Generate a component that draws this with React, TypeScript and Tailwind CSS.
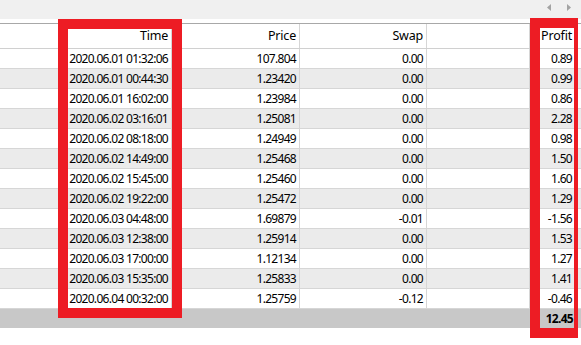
import React from "react"

const rows = [
  ["2020.06.01 01:32:06", "107.804", "0.00", "0.89"],
  ["2020.06.01 00:44:30", "1.23420", "0.00", "0.99"],
  ["2020.06.01 16:02:00", "1.23984", "0.00", "0.86"],
  ["2020.06.02 03:16:01", "1.25081", "0.00", "2.28"],
  ["2020.06.02 08:18:00", "1.24949", "0.00", "0.98"],
  ["2020.06.02 14:49:00", "1.25468", "0.00", "1.50"],
  ["2020.06.02 15:45:00", "1.25460", "0.00", "1.60"],
  ["2020.06.02 19:22:00", "1.25472", "0.00", "1.29"],
  ["2020.06.03 04:48:00", "1.69879", "-0.01", "-1.56"],
  ["2020.06.03 12:38:00", "1.25914", "0.00", "1.53"],
  ["2020.06.03 17:00:00", "1.12134", "0.00", "1.27"],
  ["2020.06.03 15:35:00", "1.25833", "0.00", "1.41"],
  ["2020.06.04 00:32:00", "1.25759", "-0.12", "-0.46"],
]

const grid = "grid grid-cols-[60px_112px_128px_127px_103px_46px_1fr]"
const cell = "border-r border-[#d6d6d6] pr-[3px] text-right leading-none flex items-center justify-end"

const App: React.FC = () => {
  return (
    <div
      className="relative w-[581px] h-[345px] bg-white overflow-hidden text-[12px] tracking-[-0.7px] text-black"
      style={{ fontFamily: '"Noto Sans", "Open Sans", sans-serif' }}
    >
      {/* tab strip with scroll arrows */}
      <div className="h-[19px] bg-[#f0f0f0] flex items-start justify-end gap-[16px] pr-[10px] pt-[4px]">
        <svg width="4" height="7" viewBox="0 0 4 7"><path d="M4 0 L0 3.5 L4 7 Z" fill="#a3a3a3" /></svg>
        <svg width="4" height="7" viewBox="0 0 4 7"><path d="M0 0 L4 3.5 L0 7 Z" fill="#a3a3a3" /></svg>
      </div>

      <div className="mt-[4px] border-t border-[#a8a8a8]">
        {/* header */}
        <div className={`${grid} h-[25px] border-b border-[#d0d0d0] text-[12.5px] tracking-[-0.2px]`}>
          <div className={cell}></div>
          <div className={cell}>Time</div>
          <div className={cell}>Price</div>
          <div className={cell}>Swap</div>
          <div className={cell}></div>
          <div className={cell}>Profit</div>
          <div></div>
        </div>

        {rows.map((r, i) => (
          <div
            key={i}
            className={`${grid} h-[20px] border-b border-[#d6d6d6] ${i % 2 === 1 ? "bg-[#ebebeb]" : "bg-white"}`}
          >
            <div className={cell}></div>
            <div className={cell}>{r[0]}</div>
            <div className={cell}>{r[1]}</div>
            <div className={cell}>{r[2]}</div>
            <div className={cell}></div>
            <div className={cell}>{r[3]}</div>
            <div></div>
          </div>
        ))}

        {/* total */}
        <div className={`${grid} h-[19px] bg-[#c8c8c8]`}>
          <div className="col-span-5"></div>
          <div className="pr-[3px] flex items-center justify-end font-bold leading-none">12.45</div>
          <div></div>
        </div>
      </div>

      {/* red annotation boxes */}
      <div className="absolute left-[58px] top-[19px] w-[124px] h-[299px] border-[10px] border-[#ed1c24]"></div>
      <div className="absolute left-[530px] top-[18px] w-[48px] h-[320px] border-y-[10px] border-l-[10px] border-r-[4px] border-[#ed1c24]"></div>
    </div>
  )
}

export default App
